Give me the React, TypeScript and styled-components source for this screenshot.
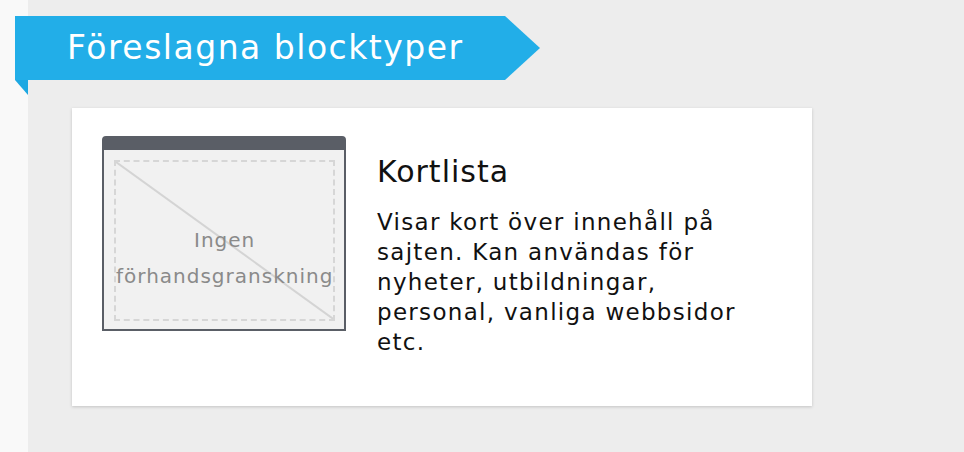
import React from "react";
import styled, { createGlobalStyle } from "styled-components";

const Global = createGlobalStyle`
  html, body {
    margin: 0;
    padding: 0;
    background: #f9f9f9;
  }
  body {
    font-family: "DejaVu Sans", Verdana, sans-serif;
  }
`;

const Page = styled.div`
  width: 964px;
  height: 452px;
  display: flex;
  overflow: hidden;
`;

const Strip = styled.div`
  width: 28px;
  flex-shrink: 0;
  background: #f9f9f9;
`;

const Main = styled.main`
  flex: 1;
  background: #ededed;
  padding-top: 16px;
`;

const Ribbon = styled.div`
  margin-left: -13px;
`;

const RibbonBar = styled.h2`
  margin: 0;
  width: 525px;
  height: 64px;
  box-sizing: border-box;
  padding: 0 0 2px 52px;
  display: flex;
  align-items: center;
  background: #22aee8;
  color: #fff;
  font-size: 33px;
  letter-spacing: 1.5px;
  font-weight: normal;
  white-space: nowrap;
  clip-path: polygon(0 0, 490px 0, 525px 50%, 490px 100%, 0 100%);
`;

const Fold = styled.div`
  width: 13px;
  height: 15px;
  background: #1ea8e2;
  clip-path: polygon(0 0, 100% 0, 100% 100%);
`;

const Card = styled.section`
  margin: 13px 0 0 44px;
  width: 740px;
  height: 298px;
  box-sizing: border-box;
  background: #fff;
  box-shadow: 0 1px 3px rgba(0, 0, 0, 0.18);
  padding: 28px 30px;
  display: flex;
  gap: 31px;
`;

const Preview = styled.div`
  width: 244px;
  height: 195px;
  flex-shrink: 0;
  box-sizing: border-box;
  border: 2px solid #5a5e66;
  border-top-width: 14px;
  border-radius: 4px 4px 0 0;
  background: #f1f1f1;
  padding: 10px 10px 8px 10px;
  display: flex;
`;

const Placeholder = styled.div`
  flex: 1;
  position: relative;
  border: 2px dashed #d6d6d6;
  display: flex;
  flex-direction: column;
  align-items: center;
  justify-content: center;
  color: #8a8a8a;
  font-size: 20px;
  line-height: 36px;
  padding-top: 34px;
`;

const Diagonal = styled.svg`
  position: absolute;
  inset: 0;
  width: 100%;
  height: 100%;
`;

const Label = styled.span`
  position: relative;
  white-space: nowrap;
  letter-spacing: 1px;
`;

const Info = styled.div`
  display: flex;
  flex-direction: column;
  color: #111;
  padding-top: 18px;
`;

const Title = styled.h3`
  margin: 0 0 17px 0;
  font-size: 30px;
  line-height: 36px;
  letter-spacing: 1px;
  font-weight: normal;
`;

const Description = styled.p`
  margin: 0;
  font-size: 23px;
  line-height: 30px;
  letter-spacing: 1.3px;
  width: 378px;
`;

export default function App() {
  return (
    <>
      <Global />
      <Page>
        <Strip />
        <Main>
          <Ribbon>
            <RibbonBar>Föreslagna blocktyper</RibbonBar>
            <Fold />
          </Ribbon>
          <Card>
            <Preview>
              <Placeholder>
                <Diagonal viewBox="0 0 100 100" preserveAspectRatio="none">
                  <line x1="0" y1="0" x2="100" y2="100" stroke="#d4d4d4" strokeWidth="2" vectorEffect="non-scaling-stroke" />
                </Diagonal>
                <Label>Ingen</Label>
                <Label>förhandsgranskning</Label>
              </Placeholder>
            </Preview>
            <Info>
              <Title>Kortlista</Title>
              <Description>
                Visar kort över innehåll på sajten. Kan användas för nyheter, utbildningar, personal, vanliga webbsidor etc.
              </Description>
            </Info>
          </Card>
        </Main>
      </Page>
    </>
  );
}
